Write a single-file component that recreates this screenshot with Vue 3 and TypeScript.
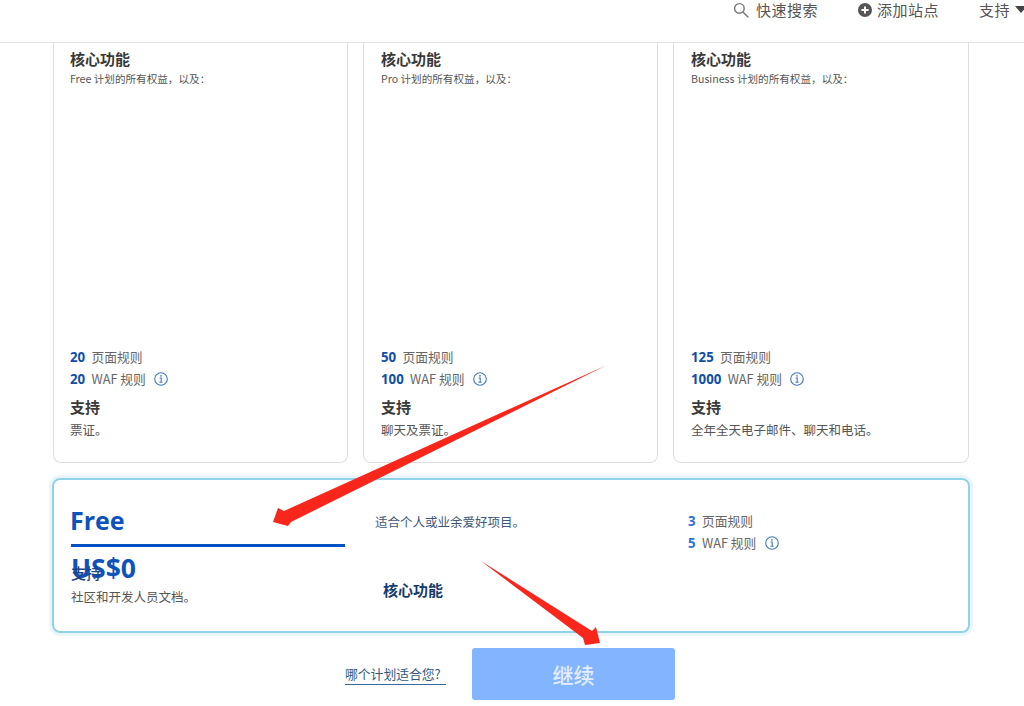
<script setup lang="ts">
interface Plan {
  name: string;
  pages: number;
  waf: number;
  support: string;
}

const plans: Plan[] = [
  { name: "Free", pages: 20, waf: 20, support: "票证。" },
  { name: "Pro", pages: 50, waf: 100, support: "聊天及票证。" },
  { name: "Business", pages: 125, waf: 1000, support: "全年全天电子邮件、聊天和电话。" },
];
</script>

<template>
  <div class="page">
    <header class="topbar">
      <span class="nav-item search">
        <svg class="nav-icon" width="16" height="16" viewBox="0 0 16 16" fill="none" stroke="#777" stroke-width="1.4">
          <circle cx="6.4" cy="6.4" r="4.8" />
          <path d="M10 10l5 5" stroke-linecap="round" />
        </svg>
        快速搜索
      </span>
      <span class="nav-item add">
        <svg class="nav-icon" width="14" height="14" viewBox="0 0 14 14">
          <circle cx="7" cy="7" r="7" fill="#555" />
          <path d="M7 3.4v7.2M3.4 7h7.2" stroke="#fff" stroke-width="2" />
        </svg>
        添加站点
      </span>
      <span class="nav-item support">
        支持
        <span class="caret"></span>
      </span>
    </header>

    <main class="content">
      <section class="cards">
        <article v-for="plan in plans" :key="plan.name" class="card">
          <h3 class="heading">核心功能</h3>
          <p class="inherit">{{ plan.name }} 计划的所有权益，以及：</p>
          <ul class="limits limits-spaced">
            <li><b>{{ plan.pages }}</b> 页面规则</li>
            <li>
              <b>{{ plan.waf }}</b> WAF 规则
              <svg class="info" width="14" height="14" viewBox="0 0 14 14" fill="none" stroke="#3f78bd">
                <circle cx="7" cy="7" r="6.3" stroke-width="1.1" />
                <path d="M5.6 6h1.6v4M5.4 10.2h3.2" stroke-width="1.1" />
                <circle cx="7" cy="3.9" r="0.8" fill="#3f78bd" stroke="none" />
              </svg>
            </li>
          </ul>
          <h3 class="heading support-heading">支持</h3>
          <p class="support-text">{{ plan.support }}</p>
        </article>
      </section>

      <section class="selected">
        <div class="sel-col first">
          <h2 class="plan-name">Free</h2>
          <div class="rule"></div>
          <div class="price">US$0</div>
          <h3 class="heading overlap">支持</h3>
          <p class="support-text docs">社区和开发人员文档。</p>
        </div>
        <div class="sel-col second">
          <p class="tagline">适合个人或业余爱好项目。</p>
          <h3 class="heading core">核心功能</h3>
        </div>
        <div class="sel-col third">
          <ul class="limits light">
            <li><b>3</b> 页面规则</li>
            <li>
              <b>5</b> WAF 规则
              <svg class="info" width="14" height="14" viewBox="0 0 14 14" fill="none" stroke="#3f78bd">
                <circle cx="7" cy="7" r="6.3" stroke-width="1.1" />
                <path d="M5.6 6h1.6v4M5.4 10.2h3.2" stroke-width="1.1" />
                <circle cx="7" cy="3.9" r="0.8" fill="#3f78bd" stroke="none" />
              </svg>
            </li>
          </ul>
        </div>
      </section>

      <footer class="actions">
        <a class="help">哪个计划适合您?</a>
        <button class="continue" type="button">继续</button>
      </footer>
    </main>

    <svg class="annotations" width="1024" height="706" viewBox="0 0 1024 706">
      <path d="M607 365L284 511L278 508L273 522L288 526L291 522Z" fill="#f9261b" />
      <path d="M481 561L592 631L596 627L600 643L585 645L583 638Z" fill="#f9261b" />
    </svg>
  </div>
</template>

<style>
html,
body {
  margin: 0;
  background: #fff;
  overflow: hidden;
}
</style>

<style scoped>
.page {
  position: relative;
  width: 1024px;
  height: 706px;
  overflow: hidden;
  background: #fff;
  color: #404040;
  font-family: "Noto Sans CJK SC", "Noto Sans", sans-serif;
}

.topbar {
  display: flex;
  justify-content: flex-start;
  align-items: center;
  height: 19px;
  padding: 0 0 23px 733px;
  border-bottom: 1px solid #e4e4e4;
  font-size: 15px;
  letter-spacing: 0.5px;
  line-height: 19px;
  color: #555;
  white-space: nowrap;
}

.nav-item {
  display: inline-flex;
  align-items: center;
}

.search .nav-icon {
  margin-right: 7px;
}

.add {
  margin-left: 40px;
}

.add .nav-icon {
  margin-right: 5px;
}

.support {
  margin-left: 40px;
}

.caret {
  margin-left: 5px;
  border-left: 6px solid transparent;
  border-right: 6px solid transparent;
  border-top: 7px solid #444;
}

.content {
  padding: 0 54px 0 52px;
}

.cards {
  display: grid;
  grid-template-columns: 295px 295px 296px;
  gap: 15px;
  margin-left: 1px;
}

.card {
  box-sizing: border-box;
  height: 420px;
  padding: 5px 16px 0;
  border: 1px solid #dedede;
  border-top: 0;
  border-radius: 0 0 8px 8px;
}

.card + .card {
  padding-left: 17px;
}

.heading {
  margin: 0;
  font-size: 15px;
  line-height: 22px;
  font-weight: 700;
  color: #3a3a3a;
}

.inherit {
  margin: 1px 0 0;
  font-size: 10.6px;
  line-height: 15px;
  color: #555;
}

.limits {
  margin: 0;
  padding: 0;
  list-style: none;
  font-size: 12.75px;
  line-height: 22px;
  color: #666;
}

.limits-spaced {
  margin-top: 260px;
}

.limits li {
  display: flex;
  align-items: center;
  gap: 3.5px;
  height: 22px;
  white-space: pre;
}

.limits b {
  font-family: "Open Sans", sans-serif;
  font-size: 13.25px;
  color: #0f4fa8;
  font-weight: 700;
}

.limits .info {
  margin-left: 2px;
}

.light b {
  color: #2f6fd6;
}

.support-heading {
  margin-top: 6px;
}

.support-text {
  margin: 3px 0 0;
  font-size: 12.5px;
  line-height: 17px;
  color: #555;
}

.docs {
  margin-top: 4px;
}

.selected {
  box-sizing: border-box;
  display: grid;
  grid-template-columns: 304px 305px 1fr;
  height: 155px;
  margin-top: 15px;
  border: 2px solid #8fd3e8;
  border-radius: 8px;
  box-shadow: 0 0 0 3px #eaf6fb;
}

.sel-col.first {
  padding: 23px 0 0 17px;
}

.plan-name {
  margin: 0 0 0 -1px;
  font-family: "Open Sans", sans-serif;
  font-size: 25px;
  line-height: 34px;
  font-weight: 700;
  color: #0f52ba;
}

.rule {
  width: 274px;
  height: 3px;
  margin-top: 7px;
  background: #0051c3;
}

.price {
  margin-top: 3px;
  font-family: "Open Sans", sans-serif;
  font-size: 26.5px;
  line-height: 36px;
  font-weight: 700;
  color: #0f52ba;
}

.overlap {
  margin-top: -24px;
  font-weight: 500;
  color: #1c4587;
}

.second {
  padding: 33px 0 0 17px;
}

.tagline {
  margin: 0;
  font-size: 12.5px;
  line-height: 17px;
  color: #3d5878;
}

.core {
  margin: 49px 0 0 8px;
  color: #173c6b;
}

.third {
  padding: 30px 0 0 25px;
}

.actions {
  display: flex;
  align-items: flex-start;
  margin-top: 15px;
  padding-left: 293px;
}

.help {
  margin-top: 17px;
  padding-bottom: 2px;
  width: 101px;
  border-bottom: 1px solid #33699f;
  font-size: 12.8px;
  line-height: 17px;
  color: #33597f;
  white-space: nowrap;
}

.continue {
  width: 203px;
  height: 52px;
  margin-left: 26px;
  padding: 0;
  border: 0;
  border-radius: 3px;
  background: #82b4ff;
  color: #e4eeff;
  font-family: inherit;
  font-size: 21px;
  font-weight: 500;
}

.annotations {
  position: absolute;
  left: 0;
  top: 0;
  pointer-events: none;
}
</style>
